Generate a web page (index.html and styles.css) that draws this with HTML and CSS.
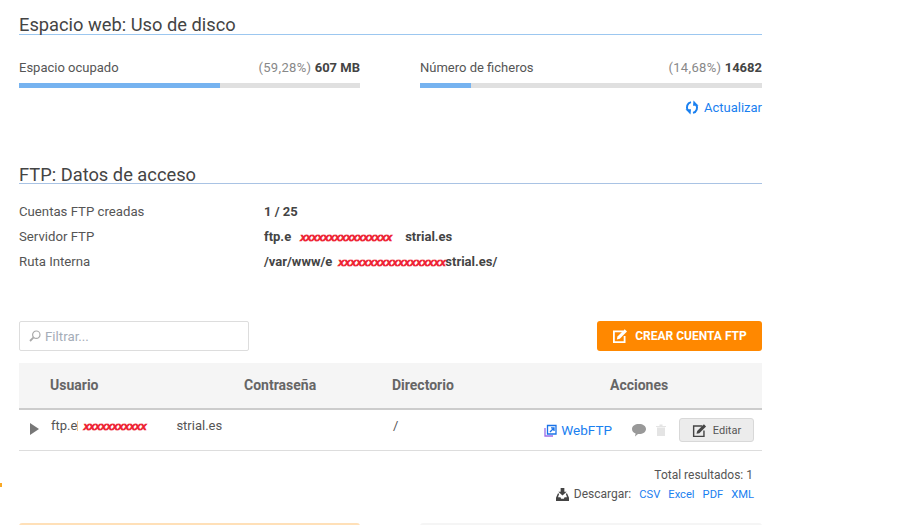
FILE: index.html
```html
<!DOCTYPE html>
<html lang="es">
<head>
<meta charset="utf-8">
<title>Espacio web</title>
<link rel="stylesheet" href="styles.css">
</head>
<body>
<span class="edge-dot"></span>
<main class="page">
  <section class="disk">
    <h2 class="title title-disk">Espacio web: Uso de disco</h2>
    <div class="meters">
      <div class="meter">
        <div class="meter-head"><span>Espacio ocupado</span><span class="meter-val"><span class="pct">(59,28%)</span> <b>607 MB</b></span></div>
        <div class="bar"><div class="fill" style="width:59%"></div></div>
      </div>
      <div class="meter">
        <div class="meter-head"><span>Número de ficheros</span><span class="meter-val"><span class="pct">(14,68%)</span> <b>14682</b></span></div>
        <div class="bar"><div class="fill" style="width:14.9%"></div></div>
      </div>
    </div>
    <div class="refresh">
      <a class="link refresh-link" href="#">
        <svg class="ico-refresh" viewBox="0 0 14 15" width="14" height="15"><path d="M6 2.100A5.300 5.300 0 0 0 2.900 10.300" fill="none" stroke="#1a80f0" stroke-width="2"/><path d="M.5 9.300H6L5.500 14.500z" fill="#1a80f0"/><path d="M8 12.900A5.300 5.300 0 0 0 11.100 4.700" fill="none" stroke="#1a80f0" stroke-width="2"/><path d="M13.500 5.700H8L8.500 .5z" fill="#1a80f0"/></svg>
        Actualizar</a>
    </div>
  </section>

  <section class="access">
    <h2 class="title title-ftp">FTP: Datos de acceso</h2>
    <dl class="facts">
      <dt>Cuentas FTP creadas</dt><dd>1 / 25</dd>
      <dt>Servidor FTP</dt><dd>ftp.e<span class="scrawl scrawl-a">xxxxxxxxxxxxxxxx</span>strial.es</dd>
      <dt>Ruta Interna</dt><dd>/var/www/e<span class="scrawl scrawl-b">xxxxxxxxxxxxxxxxxx</span>strial.es/</dd>
    </dl>
  </section>

  <section class="accounts">
    <div class="toolbar">
      <label class="filter">
        <svg class="ico-search" viewBox="0 0 12 12" width="12" height="12"><circle cx="7.300" cy="4.700" r="3.700" fill="none" stroke="#aaa" stroke-width="1.200"/><path d="M4.600 7.400 1 11" stroke="#aaa" stroke-width="1.800"/></svg>
        <input class="filter-input" type="text" placeholder="Filtrar...">
      </label>
      <a class="create" href="#">
        <svg viewBox="0 0 16 16" width="16" height="16"><path d="M1 2.500h10v1.800H2.800v8.900h8.900V8h1.800v7H1z" fill="#fff"/><path d="M5.500 8.500 12.700 1.300l2.300 2.300-7.200 7.200-3 .7z" fill="#fff"/></svg>
        CREAR CUENTA FTP</a>
    </div>
    <div class="grid grid-head">
      <span class="col-user">Usuario</span>
      <span>Contraseña</span>
      <span>Directorio</span>
      <span class="col-actions-head">Acciones</span>
    </div>
    <div class="grid grid-row">
      <span class="col-user user-cell"><span class="tri"></span>ftp.e<span class="tick"></span><span class="scrawl scrawl-c">xxxxxxxxxxx</span>strial.es</span>
      <span></span>
      <span class="dir">/</span>
      <span class="actions">
        <a class="link webftp" href="#">
          <svg viewBox="0 0 13 13" width="13" height="13"><path d="M3.500 1.500h8.500v8.500H3.500z" fill="none" stroke="#1a73e8" stroke-width="1.300"/><path d="M1 4v8h8" fill="none" stroke="#9a6ce8" stroke-width="1.300"/><path d="M6 8l3.700-3.700M7 3.900h3v3" fill="none" stroke="#1a73e8" stroke-width="1.300"/></svg>
          WebFTP</a>
        <svg class="ico-chat" viewBox="0 0 16 14" width="16" height="14"><path d="M8 1c4 0 7 2 7 5s-3 5-7 5l-1 0-3 2.500.6-3C2.300 9.700 1 8 1 6c0-3 3-5 7-5z" fill="#999"/></svg>
        <svg class="ico-trash" viewBox="0 0 10 12" width="10" height="12"><path d="M0 2h10v1H0zM3.500 .5h3V2h-3zM1 3.500h8V12H1z" fill="#e4e4e4"/></svg>
        <a class="edit" href="#">
          <svg viewBox="0 0 16 16" width="15" height="15"><path d="M1 2.500h10v1.500H2.500v9.500h9.500V8h1.500v7H1z" fill="#444"/><path d="M5.500 8.500 12.700 1.300l2.300 2.300-7.200 7.200-3 .7z" fill="#444"/></svg>
          Editar</a>
      </span>
    </div>
    <div class="summary">
      <p class="total">Total resultados: 1</p>
      <p class="downloads">
        <svg viewBox="0 0 14 14" width="13" height="13"><path d="M5 0h4v4h2.500L7 8 2.500 4H5zM2 6h1.500L2.200 10H4.800l.7 1.500h3l.7-1.500h2.600L10.500 6H12l2 4.500V14H0v-3.500z" fill="#444"/></svg>
        <span class="dl-label">Descargar:</span>
        <a class="link" href="#">CSV</a><a class="link" href="#">Excel</a><a class="link" href="#">PDF</a><a class="link" href="#">XML</a>
      </p>
    </div>
  </section>

  <div class="next-row">
    <div class="next next-warn"></div>
    <div class="next next-plain"></div>
  </div>
</main>
</body>
</html>
```
FILE: styles.css
```css
* { box-sizing: border-box; }
html, body { margin: 0; height: 525px; overflow: hidden; background: #fff; }
body { font-family: Roboto, "Liberation Sans", sans-serif; font-size: 13px; color: #555; position: relative; }
.edge-dot { position: absolute; left: 0; top: 483px; width: 2px; height: 4px; background: #f9a825; }
.page { width: 743px; margin-left: 19px; }
.title { margin: 0; font-weight: 400; font-size: 18.3px; line-height: 21px; color: #444; border-bottom: 1px solid; }
.title-disk { padding-top: 14px; height: 35px; border-color: #9cc7f0; }
.title-ftp { height: 20px; border-color: #a9c3e4; }
.meters { display: grid; grid-template-columns: 341px 342px; column-gap: 60px; margin-top: 25px; }
.meter-head { display: flex; justify-content: space-between; line-height: 15px; }
.meter-val { color: #333; }
.pct { color: #888; letter-spacing: .35px; }
b { font-weight: 700; color: #444; }
.bar { height: 5px; margin-top: 8px; background: #e0e0e0; }
.fill { height: 100%; background: #76b3f0; }
.refresh { display: flex; justify-content: flex-end; margin-top: 12px; }
.link { color: #1a80f0; text-decoration: none; }
.refresh-link { display: inline-flex; align-items: center; gap: 5px; line-height: 15px; }
.access { margin-top: 49px; }
.facts { display: grid; grid-template-columns: 245px 1fr; row-gap: 10px; margin: 20px 0 0; line-height: 15px; }
.facts dt { color: #555; font-size: 13.200px; }
.facts dd { margin: 0; font-weight: 700; color: #444; display: flex; height: 15px; }
.scrawl { font-family: "Liberation Sans", sans-serif; color: #ee1c30; font-weight: 700; font-style: italic; font-size: 11px; line-height: 14px; height: 14px; letter-spacing: -.4px; white-space: nowrap; -webkit-text-stroke: .6px #ee1c30; }
.scrawl-a { width: 92px; margin: 1px 13px 0 9px; }
.scrawl-b { width: 107px; margin: 1px 0 0 6px; letter-spacing: -.15px; }
.scrawl-c { width: 65px; margin: 1px 28px 0 5px; }
.accounts { margin-top: 52px; }
.toolbar { display: flex; justify-content: space-between; align-items: center; height: 30px; }
.filter { display: flex; align-items: center; gap: 4px; width: 230px; height: 30px; padding: 0 8px 0 9px; border: 1px solid #ddd; border-radius: 2px; }
.filter-input { flex: 1; min-width: 0; border: 0; outline: 0; padding: 0; font: inherit; font-size: 13.300px; }
.filter-input::placeholder { color: #a5adb8; opacity: 1; }
.create { display: flex; align-items: center; justify-content: center; gap: 7px; width: 165px; height: 30px; background: #ff8800; border-radius: 3px; color: #fff; font-size: 12px; font-weight: 700; text-decoration: none; }
.grid { display: grid; grid-template-columns: 225px 148px 143px 1fr; }
.grid-head { margin-top: 12px; height: 47px; padding-bottom: 2px; align-items: center; background: #f5f5f5; border-bottom: 2px solid #ccc; font-size: 14px; font-weight: 700; color: #666; }
.col-user { padding-left: 31px; }
.col-actions-head { padding-left: 75px; }
.grid-row { height: 41px; border-bottom: 1px solid #ddd; padding-top: 8px; line-height: 15px; }
.user-cell { position: relative; display: flex; padding-left: 32px; color: #555; }
.tri { position: absolute; left: 11px; top: 5px; width: 0; height: 0; border-left: 9px solid #777; border-top: 6px solid transparent; border-bottom: 6px solid transparent; }
.tick { width: 1px; height: 10px; margin-top: 3px; background: #f5c58a; }
.dir { padding-left: 1px; }
.actions { display: flex; align-items: center; justify-content: flex-end; height: 24px; padding-right: 8px; }
.webftp { display: inline-flex; align-items: center; gap: 4px; font-size: 13.500px; margin-right: 19px; }
.ico-chat { margin-right: 9px; }
.ico-trash { margin-right: 13px; }
.edit { display: flex; align-items: center; justify-content: center; gap: 6px; width: 75px; height: 24px; background: #ececec; border: 1px solid #d8d8d8; border-radius: 3px; color: #555; font-size: 11px; text-decoration: none; }
.summary { padding: 17px 8px 0 0; text-align: right; font-size: 12px; line-height: 15px; }
.total, .downloads { margin: 0; }
.total { padding-right: 1px; }
.downloads { display: flex; justify-content: flex-end; align-items: center; margin-top: 4px; }
.dl-label { margin: 0 8px 0 5px; }
.downloads .link { margin-left: 8px; font-size: 11.200px; }
.downloads .dl-label + .link { margin-left: 0; }
.next-row { display: grid; grid-template-columns: 341px 342px; column-gap: 60px; margin-top: 21px; }
.next { height: 10px; border-radius: 3px 3px 0 0; }
.next-warn { background: #ffe0b8; }
.next-plain { background: #f5f5f5; }
```
